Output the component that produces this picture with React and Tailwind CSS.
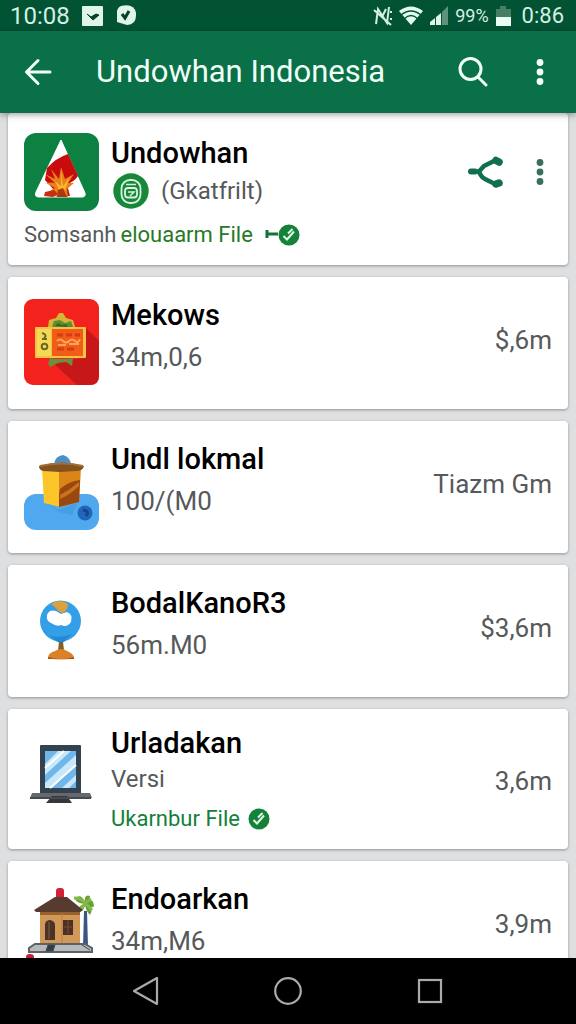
import React from 'react'

const ArrowLeft = () => (
  <svg width="28" height="28" viewBox="0 0 28 28" fill="none" stroke="#f0fff8" strokeWidth="3" strokeLinecap="round" strokeLinejoin="round">
    <path d="M26 14H3M14 2.500L2.500 14L14 25.500" />
  </svg>
)

const SearchIcon = () => (
  <svg width="30" height="30" viewBox="0 0 30 30" fill="none" stroke="#f0fff8" strokeWidth="3" strokeLinecap="round">
    <circle cx="12.500" cy="12" r="10.500" />
    <path d="M20 20L28 28" />
  </svg>
)

const DotsIcon = () => (
  <svg width="8" height="28" viewBox="0 0 8 28" fill="currentColor">
    <circle cx="4" cy="4.500" r="3.400" />
    <circle cx="4" cy="14" r="3.400" />
    <circle cx="4" cy="23.500" r="3.400" />
  </svg>
)

const ShareIcon = () => (
  <svg width="36" height="32" viewBox="0 0 36 32" fill="none" stroke="#10704c" strokeLinecap="round" strokeLinejoin="round">
    <path d="M3 15.500H11L16 10L28 4M11 15.500Q13 21 17 23L28 28.500" strokeWidth="4.500" />
    <path d="M3 15.500H7" strokeWidth="6" />
    <path d="M28 4.500L31 6M28 28L31 27" strokeWidth="7.500" />
  </svg>
)

const CheckBadge = () => (
  <svg width="22" height="22" viewBox="0 0 22 22">
    <circle cx="11" cy="11" r="10.500" fill="#148339" />
    <path d="M5.500 12L9 15.500L16 7.500" fill="none" stroke="#e4f8e9" strokeWidth="2" />
    <path d="M10 9.500L14.500 5" fill="none" stroke="#e4f8e9" strokeWidth="2" />
  </svg>
)

const FileBadge = () => (
  <svg width="36" height="36" viewBox="0 0 36 36">
    <circle cx="18" cy="18" r="17.700" fill="#17873a" />
    <rect x="8.500" y="7" width="19" height="23" rx="8.500" fill="none" stroke="#d9f2dc" strokeWidth="1.800" />
    <rect x="12" y="15" width="12" height="9.500" rx="3" fill="none" stroke="#d9f2dc" strokeWidth="1.800" />
    <path d="M13 11.500H23M15 19H21L17 23" fill="none" stroke="#d9f2dc" strokeWidth="1.500" />
  </svg>
)

const LogoIcon = () => (
  <svg width="75" height="78" viewBox="0 0 75 78" className="shrink-0">
    <rect width="75" height="78" rx="12" fill="#0d8142" />
    <path d="M37 7L61 60Q62 64 58 64H15Q10 64 12 59Z" fill="#fff" stroke="#fff" strokeLinejoin="round" />
    <path d="M23 35Q32 25 44 21L54 43Q50 49 43 51L46 63H28L30 57L21 47Z" fill="#c80b0d" />
    <path d="M24 63Q25 57 31 55L22 50Q27 49 31 50L21 41L31 46L27 36L35 46L37 34L41 46L50 41L44 50L50 50L43 56L44 64Z" fill="#e8811c" />
    <path d="M31 48L37 53L37 38L39 53L46 44L41 57H35Z" fill="#f7b62f" />
    <path d="M21 59L30 57L34 61L29 64L20 63Z" fill="#cf2b14" />
    <path d="M34 57L39 55L43 64H33Z" fill="#a83a0d" />
  </svg>
)

const LanternIcon = () => (
  <svg width="75" height="86" viewBox="0 0 75 86" className="shrink-0">
    <rect width="75" height="86" rx="9" fill="#f3221d" />
    <path d="M61 28L75 42V77Q75 86 66 86H53L28 63L61 59Z" fill="#c61719" />
    <path d="M24 28L25 21L32 19L35 14H39L42 19L49 21L51 28Z" fill="#d6b437" />
    <path d="M28 28L30 22L36 21L41 24L47 22L49 28Z" fill="#5d8f32" />
    <path d="M31 27L34 24L38 26L42 25L44 28Z" fill="#356823" />
    <path d="M26 59L30 60H45L49 59L48 67L42 63L34 64L26 68L24 65Z" fill="#68903d" />
    <rect x="11" y="28" width="51" height="31" rx="1" fill="#f2c344" />
    <rect x="13" y="30" width="14" height="27" fill="#f7d758" />
    <rect x="28" y="30" width="31" height="27" fill="#f35b19" />
    <path d="M18 34Q24 36 20 39M18 40H23" fill="none" stroke="#676b22" strokeWidth="2" />
    <circle cx="20.500" cy="47.500" r="2.800" fill="none" stroke="#676b22" strokeWidth="2" />
    <path d="M33 36H39M42 36H48M51 36H56M33 50H40M43 50H50" stroke="#d33d14" strokeWidth="3" />
    <path d="M33 42Q36 39 39 42T45 42T51 42T56 40M34 46H42M45 45H55" fill="none" stroke="#fba55d" strokeWidth="2" />
  </svg>
)

const BoxIcon = () => (
  <svg width="75" height="86" viewBox="0 0 75 86" overflow="visible" className="shrink-0">
    <rect y="51" width="75" height="36" rx="12" fill="#50a9ee" />
    <path d="M21 60L35 67L53 60L48 72L35 69Z" fill="#338cd5" opacity=".35" />
    <path d="M18 25H36V64L20 60Z" fill="#fcc62a" />
    <path d="M35 25H57L55 59L35 64Z" fill="#d98518" />
    <path d="M36 46Q45 38 56 37L55 59L35 64V52Z" fill="#9a480f" />
    <path d="M36 52Q47 46 55 39V43Q46 52 36 56Z" fill="#c87419" />
    <path d="M30 21Q31 13 39 12Q46 14 47 21Z" fill="#4a8fc9" />
    <path d="M15 23Q38 16 60 23Q59 28 52 28L36 29L19 28Q15 27 15 23Z" fill="#835221" />
    <path d="M16 23Q38 18 59 23" fill="none" stroke="#a56f32" strokeWidth="2" />
    <circle cx="61" cy="70" r="7.500" fill="#2166b9" />
    <path d="M59 67Q66 68 62 73" fill="none" stroke="#17458e" strokeWidth="3" />
  </svg>
)

const GlobeIcon = () => (
  <svg width="75" height="86" viewBox="0 0 75 86" className="shrink-0">
    <circle cx="36.500" cy="34" r="20.500" fill="#339fe7" />
    <path d="M18 42Q28 55 48 47L40 55Q36 57 32 54Z" fill="#2489d5" />
    <path d="M27 17Q36 11 44 17Q44 23 39 26Q35 26 32 21Z" fill="#dea13a" />
    <path d="M23 28Q25 22 32 24L37 27L43 25Q49 27 47 35Q43 41 37 38Q33 40 27 36Q22 34 23 28Z" fill="#fff" />
    <path d="M35 55H39L40 63H34Z" fill="#806129" />
    <path d="M24 71Q24 66 31 64Q37 60 43 64Q50 67 50 71Q37 74 24 71Z" fill="#dc8226" />
    <path d="M24 70Q37 74 50 70V72H24Z" fill="#a65515" />
  </svg>
)

const ScreenIcon = () => (
  <svg width="75" height="86" viewBox="0 0 75 86" className="shrink-0">
    <rect x="16" y="18" width="41" height="49" rx="1" fill="#34424f" />
    <rect x="21" y="24" width="31" height="37" fill="#6fb6ea" />
    <path d="M21 37L34 24H47L21 48ZM21 56L52 28V37L28 61H21ZM38 61L52 48V54L45 61Z" fill="#c8e8fb" />
    <path d="M21 41L40 24M26 61L52 38" stroke="#fff" strokeWidth="2" />
    <path d="M8 66H66L68 71H6Z" fill="#65696d" />
    <path d="M28 69H43L48 76H22Z" fill="#34373b" />
    <path d="M6 71H67" stroke="#464a4e" strokeWidth="2" />
  </svg>
)

const HouseIcon = () => (
  <svg width="75" height="86" viewBox="0 0 75 86" className="shrink-0">
    <rect x="32" y="5" width="8" height="12" rx="3" fill="#d51f36" />
    <path d="M60 28H63L64 64H59Z" fill="#38567f" />
    <path d="M61 21Q51 20 51 15Q57 10 61 19Q60 11 66 13Q66 17 62 20Q69 14 70 23Q68 26 63 22Q70 26 66 32Q62 28 61 22Q59 31 54 27Q55 22 61 21Z" fill="#65a23b" />
    <path d="M50 15Q57 15 61 20L67 16M61 21L55 28M62 21L68 27" fill="none" stroke="#85b945" strokeWidth="3" />
    <rect x="16" y="26" width="40" height="35" fill="#d29857" />
    <path d="M16 28H56V32H16Z" fill="#97602f" />
    <path d="M38 30V61" stroke="#bd7e41" strokeWidth="1" />
    <path d="M10 27L31 14H43L59 27L56 29H12Z" fill="#573a30" />
    <path d="M21 57V41Q22 37 26 37Q31 38 31 42V57Z" fill="#4d3327" />
    <path d="M25 39V56" stroke="#806040" />
    <rect x="39" y="37" width="10" height="15" fill="#4b3025" />
    <path d="M44 37V51M40 44H48" stroke="#77502f" />
    <path d="M11 61H61L68 65V69H5V65Z" fill="#b6babd" stroke="#5c6265" strokeWidth="2" />
    <path d="M24 62H31L29 68H22ZM58 62L66 67" fill="#313c45" stroke="#414c54" />
    <ellipse cx="6" cy="74" rx="4" ry="3" fill="#c51f38" />
  </svg>
)

const apps = [
  { name: 'Mekows', detail: '34m,0,6', size: '$,6m', Icon: LanternIcon },
  { name: 'Undl lokmal', detail: '100/(M0', size: 'Tiazm Gm', Icon: BoxIcon },
  { name: 'BodalKanoR3', detail: '56m.M0', size: '$3,6m', Icon: GlobeIcon },
  { name: 'Urladakan', detail: 'Versi', file: 'Ukarnbur File', size: '3,6m', Icon: ScreenIcon },
  { name: 'Endoarkan', detail: '34m,M6', size: '3,9m', Icon: HouseIcon },
]

const StatusBar = () => (
  <div className="flex h-[31px] shrink-0 items-center justify-between bg-[#025234] pr-3 pl-2.5 text-[22px] leading-7 text-[#d5efe2]">
    <div className="flex items-center gap-3">
      <span className="text-2xl leading-7">10:08</span>
      <svg width="22" height="20" viewBox="0 0 22 20">
        <rect width="21" height="20" rx="1" fill="#dff5e9" />
        <path d="M5 8L9 11L14 8L17 9L11 14Z" fill="#073f2b" stroke="#073f2b" />
      </svg>
      <svg width="21" height="21" viewBox="0 0 21 21">
        <path d="M5 1Q18-2 20 8Q21 20 11 20L1 17V6Q2 2 5 1Z" fill="#dff5e9" />
        <path d="M6 9L9 13L13 6" fill="none" stroke="#073f2b" strokeWidth="3" />
      </svg>
    </div>
    <div className="flex items-center gap-1.5">
      <svg width="20" height="22" viewBox="0 0 20 22" fill="none" stroke="#d5efe2" strokeWidth="2">
        <path d="M3 19L5 4L14 18L16 2M1 5L18 20M9 12L13 4M18 6V8M18 13V15" />
      </svg>
      <svg width="24" height="20" viewBox="0 0 24 20">
        <path d="M0 5Q12-4 24 5L12 19Z" fill="#e5fbf0" />
        <path d="M2 9Q12 1 22 9M5 13Q12 6 19 13" fill="none" stroke="#025234" strokeWidth="1.300" />
      </svg>
      <svg width="20" height="21" viewBox="0 0 20 21">
        <path d="M1 20V17L6 13V20ZM7 20V12L12 8V20Z" fill="#dff5e9" />
        <path d="M13 20V7L19 1V20Z" fill="#5c947b" />
      </svg>
      <span className="text-lg">99%</span>
      <svg width="17" height="20" viewBox="0 0 17 20">
        <path d="M1 3H5V0H11V3H16V12H1Z" fill="#477f65" />
        <path d="M1 11H16V20H1Z" fill="#e9fff4" />
      </svg>
      <span className="ml-1">0:86</span>
    </div>
  </div>
)

const Header = () => (
  <header className="relative z-10 flex h-[82px] shrink-0 items-center bg-[#0a7047] pr-8 pl-6 text-[#f0fff8] shadow-[0_2px_6px_rgba(0,0,0,0.35)]">
    <button type="button" aria-label="Back">
      <ArrowLeft />
    </button>
    <h1 className="ml-11 flex-1 text-[31px] leading-10">Undowhan Indonesia</h1>
    <button type="button" aria-label="Search">
      <SearchIcon />
    </button>
    <button type="button" aria-label="More options" className="ml-12">
      <DotsIcon />
    </button>
  </header>
)

const FeaturedCard = () => (
  <article className="rounded-sm bg-white px-4 pt-5 pb-3 shadow-[0_1px_3px_rgba(0,0,0,0.35)]">
    <div className="flex gap-3">
      <LogoIcon />
      <div className="flex-1">
        <h2 className="text-[29px] leading-10 font-medium text-black">Undowhan</h2>
        <div className="flex items-center gap-3 pl-0.5">
          <FileBadge />
          <span className="text-2xl leading-9 text-[#56595b]">(Gkatfrilt)</span>
        </div>
      </div>
      <div className="flex items-center gap-8 pr-2 text-[#39705c]">
        <button type="button" aria-label="Share">
          <ShareIcon />
        </button>
        <button type="button" aria-label="App options">
          <DotsIcon />
        </button>
      </div>
    </div>
    <div className="mt-1.5 flex items-center text-[22px] leading-9 text-[#56595b]">
      <span>Somsanh</span>
      <span className="ml-1 text-[#277a25]">elouaarm File</span>
      <svg width="13" height="10" viewBox="0 0 13 10" className="ml-3" fill="none" stroke="#14733a" strokeWidth="3">
        <path d="M2 0V8M2 4H13" />
      </svg>
      <CheckBadge />
    </div>
  </article>
)

const AppCard = ({ app }) => {
  const { name, detail, file, size, Icon } = app
  return (
    <article
      className={`flex shrink-0 items-center gap-3 rounded-sm bg-white px-4 shadow-[0_1px_3px_rgba(0,0,0,0.35)] ${
        file ? 'pt-4 pb-3' : 'pt-5 pb-[26px]'
      }`}
    >
      <div className="flex flex-1 gap-3">
        <div className="h-[86px] pt-0.5">
          <Icon />
        </div>
        <div>
          <h2 className="text-[29px] leading-9 font-medium text-black">{name}</h2>
          {file ? (
            <>
              <p className="text-2xl leading-9 text-[#56595b]">{detail}</p>
              <p className="mt-1 flex items-center gap-2 text-[22px] leading-9 text-[#14803a]">
                {file}
                <CheckBadge />
              </p>
            </>
          ) : (
            <p className="mt-1.5 text-[26px] leading-9 text-[#56595b]">{detail}</p>
          )}
        </div>
      </div>
      <span className="text-[26px] leading-9 text-[#56595b]">{size}</span>
    </article>
  )
}

const NavBar = () => (
  <nav className="flex h-[66px] shrink-0 items-center justify-center gap-28 bg-black">
    <button type="button" aria-label="Back">
      <svg width="30" height="30" viewBox="0 0 30 30" fill="none" stroke="#aaa" strokeWidth="2.200" strokeLinejoin="round">
        <path d="M26 2V28L3 15Z" />
      </svg>
    </button>
    <button type="button" aria-label="Home">
      <svg width="30" height="30" viewBox="0 0 30 30" fill="none" stroke="#aaa" strokeWidth="2.200">
        <circle cx="15" cy="15" r="12.800" />
      </svg>
    </button>
    <button type="button" aria-label="Recent apps">
      <svg width="30" height="30" viewBox="0 0 30 30" fill="none" stroke="#aaa" strokeWidth="2.200">
        <rect x="4" y="4" width="22" height="22" />
      </svg>
    </button>
  </nav>
)

const App = () => {
  return (
    <div className="flex h-screen flex-col overflow-hidden bg-[#dedfe0] font-['Roboto',sans-serif]">
      <StatusBar />
      <Header />
      <main className="flex min-h-0 flex-1 flex-col gap-3 overflow-hidden px-2">
        <FeaturedCard />
        {apps.map((app) => (
          <AppCard key={app.name} app={app} />
        ))}
      </main>
      <NavBar />
    </div>
  )
}

export default App
